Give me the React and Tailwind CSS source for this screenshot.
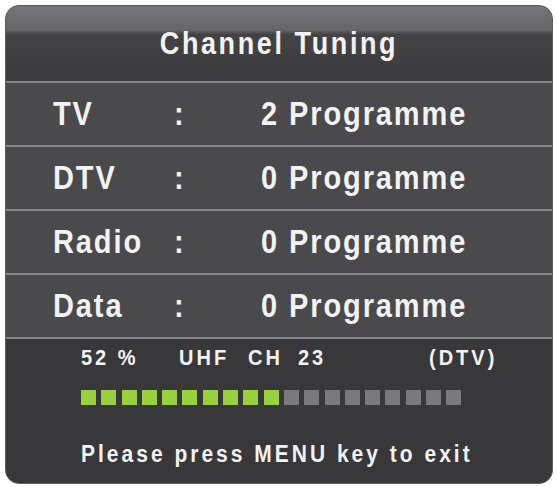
import React from 'react';

const rows = [
  { label: 'TV', count: 2 },
  { label: 'DTV', count: 0 },
  { label: 'Radio', count: 0 },
  { label: 'Data', count: 0 },
];

const App = () => {
  const filled = 10;
  const total = 19;

  return (
    <div className="w-[557px] h-[487px] bg-white p-[5px]" style={{ fontFamily: '"Liberation Sans", Arial, sans-serif' }}>
      <div className="w-[548px] h-[479px] rounded-[14px] overflow-hidden border border-[#5c5c5e] bg-[#38383a] flex flex-col font-bold text-[#f2f2f2]">
        {/* title */}
        <div className="h-[77px] shrink-0 flex items-center justify-center border-b-2 border-[#88888a] bg-[linear-gradient(180deg,#767678_0%,#666668_32%,#434345_38%,#3b3b3d_100%)]">
          <span className="text-[27px] tracking-[2.6px] scale-y-[1.18] leading-none">Channel Tuning</span>
        </div>

        {/* rows */}
        {rows.map((r) => (
          <div key={r.label} className="h-[64px] shrink-0 flex items-center border-b-2 border-[#88888a] bg-[#4a4a4d] pl-[47px]">
            <span className="w-[121px] text-[29px] tracking-[1.9px] scale-y-[1.15] leading-none">{r.label}</span>
            <span className="w-[87px] text-[29px] scale-y-[1.15] leading-none">:</span>
            <span className="text-[29px] tracking-[1.9px] scale-y-[1.15] leading-none whitespace-pre">{r.count} Programme</span>
          </div>
        ))}

        {/* status */}
        <div className="flex-1 flex flex-col pt-[8px] pl-[75px]">
          <div className="h-[20px] flex items-center text-[20px] tracking-[3px] leading-none">
            <span className="w-[98px] whitespace-pre scale-y-[1.12]">52 %</span>
            <span className="w-[69px] scale-y-[1.12]">UHF</span>
            <span className="w-[50px] scale-y-[1.12]">CH</span>
            <span className="w-[131px] scale-y-[1.12]">23</span>
            <span className="scale-y-[1.12]">(DTV)</span>
          </div>
          <div className="mt-[23px] flex gap-[5.3px]">
            {Array.from({ length: total }).map((_, i) => (
              <div
                key={i}
                className={`w-[15px] h-[15px] ${i < filled ? 'bg-[#98d03e]' : 'bg-[#7a7a7c]'}`}
              />
            ))}
          </div>
          <div className="mt-[35px] h-[26px] flex items-center text-[21px] tracking-[3px] leading-none">
            <span className="scale-y-[1.18]">Please press MENU key to exit</span>
          </div>
        </div>
      </div>
    </div>
  );
};

export default App;
